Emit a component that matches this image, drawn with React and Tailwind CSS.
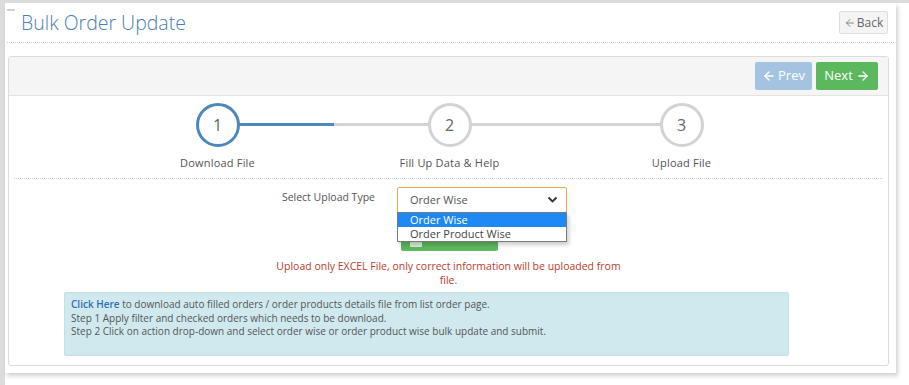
import React from 'react';
import { ArrowLeft, ArrowRight } from 'lucide-react';

const Step = ({ n, label, active, left, right }) => (
  <div className="relative flex flex-col items-center w-[232px]">
    <div className="relative flex items-center justify-center w-full h-[44px]">
      {left && <div className={`absolute left-0 right-1/2 top-[20px] h-[3px] ${left}`}></div>}
      {right && <div className={`absolute left-1/2 right-0 top-[20px] h-[3px] ${right}`}></div>}
      <div
        className={`relative z-10 w-[44px] h-[44px] rounded-full bg-white border-[3px] flex items-center justify-center text-[16px] text-[#666] ${
          active ? 'border-[#4d88ba]' : 'border-[#d3d3d3]'
        }`}
      >
        {n}
      </div>
    </div>
    <div className="mt-[9px] text-[11px] leading-[14px] text-[#555] tracking-[0.2px]">{label}</div>
  </div>
);

const App = () => {
  return (
    <div className="min-h-[385px] bg-white border-l-[5px] border-t-[3px] border-[#dcdcdc] font-['Open_Sans',sans-serif]">
      <div className="relative w-[891px] h-[370px] bg-white shadow-[2px_3px_4px_rgba(0,0,0,0.18)]">
        <div className="absolute left-[2px] top-[6px] w-[8px] h-[2px] bg-[#cfcfcf]"></div>

        <div className="flex items-center justify-between h-[40px] mx-[2px] pl-[14px] pr-[6px] border-b border-dotted border-[#c8c8c8]">
          <h1 className="text-[19.5px] font-light text-[#4a7db3] leading-none pt-[1px]">Bulk Order Update</h1>
          <button className="h-[23px] w-[49px] bg-[#f4f4f4] border border-[#dedede] rounded-[2px] text-[12px] text-[#666] flex items-center justify-center gap-[1px]">
            <ArrowLeft size={12} strokeWidth={1.5} />Back
          </button>
        </div>

        <div className="mt-[13px] ml-[3px] w-[881px] h-[310px] border border-[#dcdcdc] rounded-[3px]">
          <div className="h-[39px] bg-[#f5f5f5] border-b border-[#e3e3e3] flex items-center justify-end gap-[4px] pr-[10px]">
            <button className="h-[28px] w-[57px] rounded-[2px] bg-[#a4c3e0] text-white text-[13px] flex items-center justify-center gap-[2px]">
              <ArrowLeft size={14} strokeWidth={2.5} />Prev
            </button>
            <button className="h-[28px] w-[62px] rounded-[2px] bg-[#5cb85c] text-white text-[13px] flex items-center justify-center gap-[3px]">
              Next<ArrowRight size={14} strokeWidth={2.5} />
            </button>
          </div>

          <div className="pt-[7px]">
            <div className="flex justify-center pl-[2px]">
              <Step n="1" label="Download File" active right="bg-[#4d88ba]" />
              <Step n="2" label="Fill Up Data & Help" left="bg-[#d3d3d3]" right="bg-[#d3d3d3]" />
              <Step n="3" label="Upload File" left="bg-[#d3d3d3]" />
            </div>

            <div className="mx-[5px] mt-[8px] border-b border-dotted border-[#c8c8c8]"></div>

            <div className="relative flex mt-[8px]">
              <div className="w-[366px] pt-[3px] text-right text-[10.5px] leading-[14px] text-[#555]">Select Upload Type</div>
              <div className="ml-[22px] w-[170px]">
                <div className="h-[26px] border border-[#f0a64e] rounded-[2px] flex items-center justify-between pl-[12px] pr-[8px] text-[11px] text-[#555] bg-white">
                  <span>Order Wise</span>
                  <svg width="11" height="8" viewBox="0 0 11 8" fill="none">
                    <path d="M1.5 1.5 L5.5 5.5 L9.5 1.5" stroke="#333" strokeWidth="1.8" />
                  </svg>
                </div>
                <button className="mt-[8px] ml-[4px] h-[30px] w-[97px] rounded-[2px] bg-[#5cb85c] text-white text-[12px] leading-[14px] flex items-start pt-[4px] pl-[9px] gap-[6px]">
                  <span className="inline-block self-end mb-[4px] w-[12px] h-[9px] bg-[#d9eed9] rounded-[1px]"></span>
                  <span>Upload</span>
                </button>
                <div className="absolute top-[25px] w-[170px] bg-white border border-[#7a7a7a] shadow-[2px_3px_4px_rgba(0,0,0,0.2)] text-[11px] leading-[14px] z-20">
                  <div className="bg-[#1e88f5] text-white pl-[12px]">Order Wise</div>
                  <div className="text-[#444] pl-[12px]">Order Product Wise</div>
                </div>
              </div>
            </div>

            <div className="mt-[8px] mx-auto w-[350px] text-center text-[10.5px] leading-[14px] text-[#c0392b]">
              Upload only EXCEL File, only correct information will be uploaded from file.
            </div>

            <div className="mt-[5px] ml-[55px] w-[725px] h-[64px] bg-[#d0e9ef] border border-[#bfe2ea] rounded-[2px] px-[6px] pt-[5px] text-[10px] leading-[13.5px] text-[#555]">
              <div>
                <span className="font-semibold text-[#2f6fae]">Click Here</span> to download auto filled orders / order products details file from list order page.
              </div>
              <div>Step 1 Apply filter and checked orders which needs to be download.</div>
              <div>Step 2 Click on action drop-down and select order wise or order product wise bulk update and submit.</div>
            </div>
          </div>
        </div>
      </div>
    </div>
  );
};

export default App;
